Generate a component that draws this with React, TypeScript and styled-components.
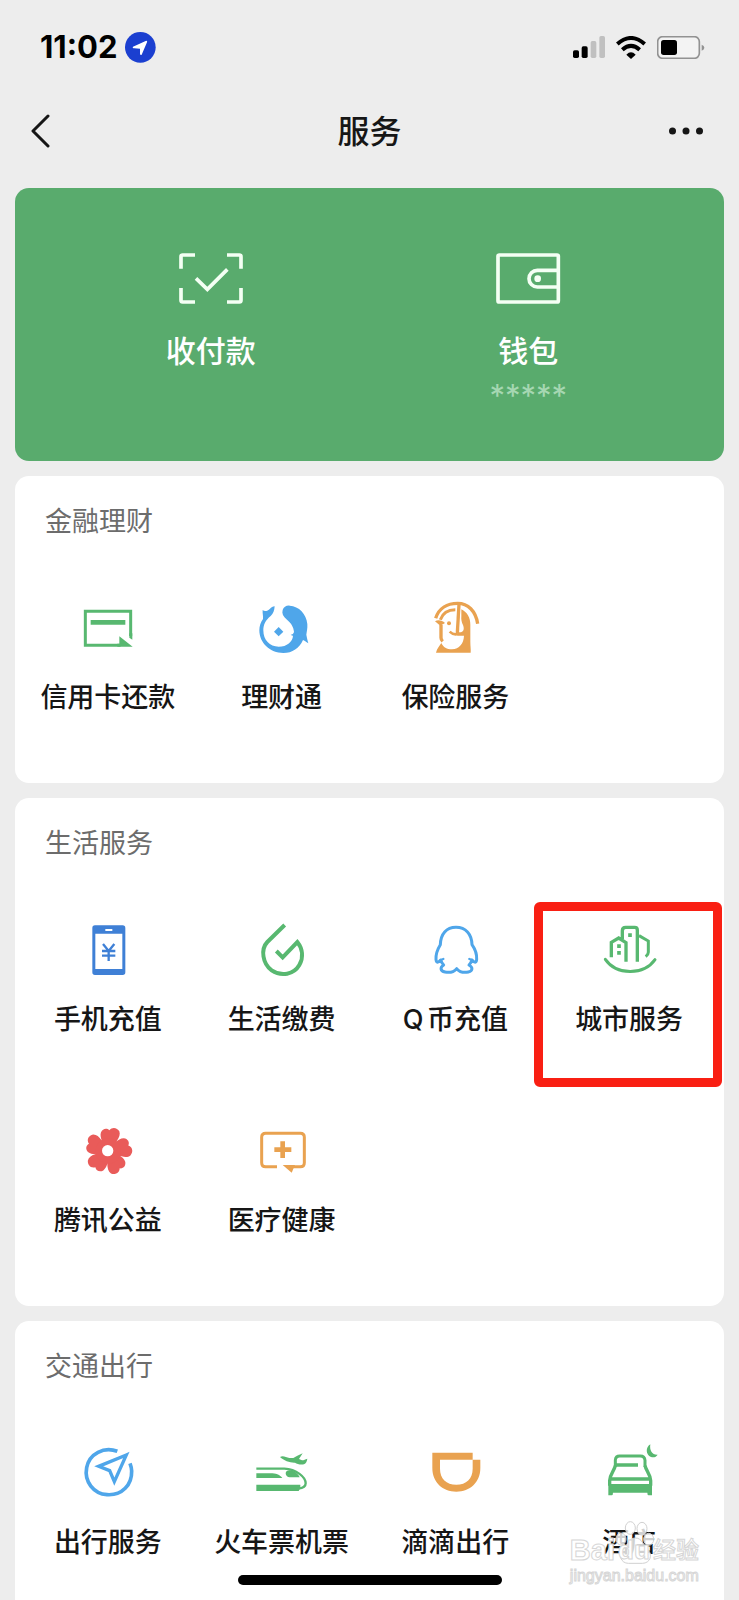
import React from "react";
import styled, { createGlobalStyle } from "styled-components";

const GREEN = "#58b870";
const BLUE = "#4fa6ea";
const DEEP_BLUE = "#3f80d6";
const ORANGE = "#e9a250";
const RED = "#e95b59";

const GlobalStyle = createGlobalStyle`
  * { box-sizing: border-box; }
  body {
    margin: 0;
    background: #ededed;
    color: #161616;
    font-family: Inter, "Noto Sans CJK SC", sans-serif;
  }
  button {
    font: inherit;
    color: inherit;
    background: none;
    border: 0;
    padding: 0;
    cursor: pointer;
  }
  svg { display: block; }
`;

const Screen = styled.div`
  position: relative;
  display: flex;
  flex-direction: column;
  height: 100vh;
  overflow: hidden;
`;

const StatusBar = styled.div`
  flex: none;
  display: flex;
  align-items: center;
  justify-content: space-between;
  height: 94px;
  padding: 0 34px 0 40px;
`;

const StatusGroup = styled.div<{ $gap: number }>`
  display: flex;
  align-items: center;
  gap: ${(p) => p.$gap}px;
`;

const Clock = styled.time`
  font-size: 31px;
  font-weight: 700;
  line-height: 36px;
  color: #000;
`;

const NavBar = styled.header`
  flex: none;
  display: grid;
  grid-template-columns: 1fr auto 1fr;
  align-items: center;
  height: 74px;
  padding: 0 30px;
`;

const NavButton = styled.button<{ $end?: boolean }>`
  justify-self: ${(p) => (p.$end ? "end" : "start")};
`;

const Title = styled.h1`
  margin: 0;
  padding-top: 2px;
  font-size: 32px;
  font-weight: 500;
  line-height: 40px;
`;

const Content = styled.main`
  flex: 1;
  min-height: 0;
  display: flex;
  flex-direction: column;
  gap: 15px;
  padding: 20px 15px 0;
  overflow-y: auto;
  scrollbar-width: none;
`;

const PayCard = styled.section`
  flex: none;
  display: grid;
  grid-template-columns: 1fr 1fr;
  align-items: start;
  padding: 60px 37px 48px;
  border-radius: 14px;
  background: #59ab6d;
  color: #fff;
`;

const PayButton = styled.button`
  display: flex;
  flex-direction: column;
  align-items: center;
`;

const PayLabel = styled.span`
  margin-top: 23px;
  font-size: 30px;
  font-weight: 500;
  line-height: 40px;
`;

const Balance = styled.span`
  margin-top: 4px;
  height: 38px;
  font-size: 31px;
  line-height: 42px;
  color: #a6d7b2;
`;

const Card = styled.section`
  flex: none;
  border-radius: 14px;
  background: #fff;
`;

const CardTitle = styled.h2`
  margin: 0;
  padding: 27px 30px 41px;
  font-size: 27px;
  font-weight: 400;
  line-height: 38px;
  color: #6c6c6c;
`;

const ServiceGrid = styled.ul`
  display: grid;
  grid-template-columns: repeat(4, 1fr);
  margin: 0;
  padding: 0 8px 0 6px;
  list-style: none;
`;

const ServiceCell = styled.li`
  position: relative;
`;

const ServiceButton = styled.button`
  display: flex;
  flex-direction: column;
  align-items: center;
  gap: 21px;
  width: 100%;
  padding: 16px 0 66px;
`;

const ServiceLabel = styled.span`
  font-size: 27px;
  font-weight: 500;
  line-height: 38px;
  white-space: nowrap;
  text-autospace: normal;
`;

const Highlight = styled.div`
  position: absolute;
  inset: -2px -6px 18px -8px;
  border: 9px solid #f91f13;
  border-radius: 6px;
  pointer-events: none;
`;

const HomeIndicator = styled.div`
  position: absolute;
  left: 50%;
  bottom: 15px;
  width: 264px;
  height: 10px;
  border-radius: 5px;
  background: #000;
  transform: translateX(-50%);
`;

const Watermark = styled.div`
  position: absolute;
  right: 40px;
  bottom: 14px;
  font-family: "Liberation Sans", "Noto Sans CJK SC", sans-serif;
  color: #fff;
  -webkit-text-stroke: 1px #d6d6d6;
  pointer-events: none;
`;

const WatermarkName = styled.div`
  display: flex;
  align-items: center;
  font-size: 29px;
  font-weight: 700;
  line-height: 32px;
`;

const WatermarkSmall = styled.span`
  font-size: 23px;
  font-weight: 500;
`;

const PawWrap = styled.span`
  position: relative;
  display: flex;
  justify-content: center;
  width: 38px;
`;

const Paw = styled.svg`
  position: absolute;
  left: 0;
  bottom: 2px;
`;

const PawText = styled.span`
  position: relative;
  font-size: 26px;
`;

const WatermarkUrl = styled.div`
  font-size: 16px;
  line-height: 20px;
`;

type IconProps = { x: number; y: number; children: React.ReactNode };

/* Service icons are drawn on a grid of three units to the pixel. */
const Icon = ({ x, y, children }: IconProps) => (
  <svg width="60" height="60" viewBox={`${x} ${y} 180 180`} fill="none" aria-hidden="true">
    {children}
  </svg>
);

const CreditCardIcon = () => (
  <Icon x={144} y={324}>
    <path d="M302 438V364H166V466H272" stroke={GREEN} strokeWidth="9" />
    <path d="M182 397H286" stroke={GREEN} strokeWidth="14" />
    <path d="M268 439L308 470H262V461H268Z" fill={GREEN} />
    <path d="M298 430H307V449L298 443Z" fill={GREEN} />
  </Icon>
);

const FishIcon = () => (
  <Icon x={665} y={324}>
    <path
      fill={BLUE}
      d="M697 360C703 366 712 363 719 356C723 352 727 350 733 349C732 362 729 370 721 378C706 390 699 404 699 421C699 450 718 470 745 470C770 470 787 455 788 437C786 437 783 436 781 434C786 434 790 431 791 426C790 410 781 398 770 389C758 380 754 370 757 360C760 351 768 346 778 347C806 349 828 371 831 402C832 416 829 426 828 434C830 445 832 453 834 460C827 455 822 452 818 450C807 475 786 489 759 489C719 489 687 459 687 421C687 408 691 396 698 387C699 378 696 370 697 360Z"
    />
    <path d="M745 411L759 425L745 439L731 425Z" fill={BLUE} />
  </Icon>
);

const InsuranceIcon = () => (
  <Icon x={1} y={9}>
    <path d="M33 70C42 40 68 25 99 25C130 25 153 48 159 86" stroke={ORANGE} strokeWidth="10" />
    <path d="M103 27L98 114" stroke={ORANGE} strokeWidth="10" />
    <path d="M47 74C54 54 70 44 92 44" stroke={ORANGE} strokeWidth="9" />
    <path d="M31 79C40 73 52 76 61 84L47 92Z" fill={ORANGE} />
    <circle cx="73" cy="85" r="6" fill={ORANGE} />
    <path d="M49 90V128C49 132 51 136 54 139" stroke={ORANGE} strokeWidth="10" />
    <path d="M110 43C128 52 137 68 137 90V140C137 154 139 162 138 173H34C37 160 44 154 50 144C56 157 66 163 82 163C104 161 117 146 118 122H98V112H109C118 109 119 100 115 90C111 82 109 74 110 64Z" fill={ORANGE} />
    <path d="M100 117C92 119 82 117 75 110" stroke={ORANGE} strokeWidth="8" />
  </Icon>
);

const PhoneIcon = () => (
  <Icon x={145} y={60}>
    <path
      fillRule="evenodd"
      fill={DEEP_BLUE}
      d="M196 76H279Q287 76 287 84V217Q287 225 279 225H196Q188 225 188 217V84Q188 76 196 76ZM197 101V207H278V101ZM227 87V93H248V87Z"
    />
    <path d="M220 132L237 153L254 132M237 151V183M217 153H257M217 167H257" stroke={DEEP_BLUE} strokeWidth="7" />
  </Icon>
);

const UtilityIcon = () => (
  <Icon x={665} y={60}>
    <path
      d="M763 75L711 126C690 148 697 192 724 211C753 231 791 223 807 195C820 172 817 146 801 126L757 172L738 153"
      stroke={GREEN}
      strokeWidth="12"
    />
  </Icon>
);

const PenguinIcon = () => (
  <Icon x={106} y={90}>
    <path
      stroke={BLUE}
      strokeWidth="9"
      strokeLinejoin="round"
      strokeLinecap="round"
      d="M199 112C170 112 153 132 152 164C144 177 138 192 139 208C140 219 145 219 153 210C155 217 158 221 162 225C151 232 151 243 166 246C181 249 194 244 201 236C208 244 221 249 236 246C250 243 250 232 238 225C243 220 245 217 247 210C255 219 260 219 261 208C262 192 256 177 247 164C246 132 228 112 199 112Z"
    />
    <path d="M153 210L161 207M247 210L239 207" stroke={BLUE} strokeWidth="7" strokeLinecap="round" />
  </Icon>
);

const CityIcon = () => (
  <Icon x={627} y={90}>
    <path d="M664 202V157L686 144L708 158V215M697 147V122Q697 112 707 112H734Q742 112 742 120V215" stroke={GREEN} strokeWidth="10" />
    <path d="M747 137L775 153V187Q775 194 767 200" stroke={GREEN} strokeWidth="9" />
    <path d="M720 130V141M687 163V174M687 183V194" stroke={GREEN} strokeWidth="11" />
    <path d="M646 208C679 256 761 257 795 209" stroke={GREEN} strokeWidth="9" strokeLinecap="round" />
  </Icon>
);

const petal = "M233 124C222 106 207 83 213 67C218 56 230 53 238 61C247 49 262 53 268 64C275 82 252 104 233 124Z";

const FlowerIcon = () => (
  <Icon x={144} y={33}>
    {[0, 72, 144, 216, 288].map((turn) => (
      <path key={turn} d={petal} fill={RED} transform={`rotate(${turn} 235 123)`} />
    ))}
    <circle cx="235" cy="123" r="38" fill={RED} />
    <circle cx="233" cy="122" r="17" fill="#fff" />
  </Icon>
);

const HealthIcon = () => (
  <Icon x={665} y={33}>
    <path d="M740 170H706Q694 170 694 158V82Q694 70 706 70H810Q822 70 822 82V158Q822 170 810 170H782" stroke={ORANGE} strokeWidth="9" />
    <path d="M757 94V144M732 119H783" stroke={ORANGE} strokeWidth="14" />
    <path d="M757 165H794L784 188Z" fill={ORANGE} />
  </Icon>
);

const TravelIcon = () => (
  <Icon x={144} y={312}>
    <path d="M262 337C222 322 178 344 170 386C162 428 191 464 231 467C277 470 306 437 305 396C305 388 303 381 300 373" stroke={BLUE} strokeWidth="11" />
    <path d="M289 348L206 382L239 395L253 428Z" stroke={BLUE} strokeWidth="10" />
  </Icon>
);

const TrainIcon = () => (
  <Icon x={667} y={312}>
    <path d="M680 389H764C800 391 828 414 828 433Q828 447 806 449" stroke={GREEN} strokeWidth="7" />
    <path d="M768 403C768 393 782 392 792 397C802 402 808 409 810 415H780C773 415 768 410 768 403Z" fill={GREEN} />
    <path d="M680 403H728C744 404 752 410 758 417H680ZM680 437H812V447L807 456H680Z" fill={GREEN} />
    <path d="M751 354C760 349 769 355 779 357H791L803 350L819 343L808 360L817 364C823 364 827 360 833 359C832 367 829 373 823 376C812 378 802 375 796 371C783 372 762 365 751 354Z" fill={GREEN} />
  </Icon>
);

const DidiIcon = () => (
  <Icon x={166} y={72}>
    <path
      fillRule="evenodd"
      fill={ORANGE}
      d="M188 101H309V122H332V147C332 190 301 218 260 218C219 218 188 190 188 147ZM211 122V149C211 179 230 197 260 197C290 197 309 179 309 149V122Z"
    />
  </Icon>
);

const HotelIcon = () => (
  <Icon x={687} y={72}>
    <path d="M736 143V123Q737 111 749 111H811Q824 111 825 124V143" stroke={GREEN} strokeWidth="9" />
    <path d="M736 140C733 155 720 164 719 185V200M825 140C828 155 841 164 842 185V200M738 138H804M720 180H841" stroke={GREEN} strokeWidth="10" />
    <path d="M715 195H846V229H836Q832 229 832 221H729Q729 229 725 229H715Z" fill={GREEN} />
    <path d="M841 76C826 85 827 108 843 114C852 117 859 113 863 107C847 108 838 96 841 76Z" fill={GREEN} />
  </Icon>
);

const ScanPayIcon = () => (
  <svg width="72" height="60" viewBox="105 54 216 180" fill="none" stroke="#f4fff4" strokeWidth="11" aria-hidden="true">
    <path d="M165 75H128Q123 75 123 80V116M261 75H298Q303 75 303 80V116M123 174V211Q123 216 128 216H165M303 174V211Q303 216 298 216H261" />
    <path d="M168 145L202 178L262 118" />
  </svg>
);

const WalletIcon = () => (
  <svg width="72" height="60" viewBox="1056 54 216 180" fill="none" stroke="#f4fff4" strokeWidth="11" aria-hidden="true">
    <rect x="1074" y="75" width="181" height="141" rx="4" />
    <path d="M1255 121H1192A25 25 0 0 0 1192 171H1255" />
    <circle cx="1193" cy="146" r="10" fill="#f4fff4" stroke="none" />
  </svg>
);

type Service = { label: string; icon: React.ComponentType; highlighted?: boolean };

const sections: { title: string; services: Service[] }[] = [
  {
    title: "金融理财",
    services: [
      { label: "信用卡还款", icon: CreditCardIcon },
      { label: "理财通", icon: FishIcon },
      { label: "保险服务", icon: InsuranceIcon },
    ],
  },
  {
    title: "生活服务",
    services: [
      { label: "手机充值", icon: PhoneIcon },
      { label: "生活缴费", icon: UtilityIcon },
      { label: "Q币充值", icon: PenguinIcon },
      { label: "城市服务", icon: CityIcon, highlighted: true },
      { label: "腾讯公益", icon: FlowerIcon },
      { label: "医疗健康", icon: HealthIcon },
    ],
  },
  {
    title: "交通出行",
    services: [
      { label: "出行服务", icon: TravelIcon },
      { label: "火车票机票", icon: TrainIcon },
      { label: "滴滴出行", icon: DidiIcon },
      { label: "酒店", icon: HotelIcon },
    ],
  },
];

export default function App() {
  return (
    <Screen>
      <GlobalStyle />
      <StatusBar>
        <StatusGroup $gap={7}>
          <Clock>11:02</Clock>
          <svg width="31" height="31" viewBox="0 0 93 93" aria-hidden="true">
            <circle cx="46" cy="46" r="46" fill="#1b3fd0" />
            <path d="M24 44L62 27Q68 25 66 31L50 68Q46 71 45 65V50L28 49Q21 48 24 44Z" fill="#fff" />
          </svg>
        </StatusGroup>
        <StatusGroup $gap={11}>
          <svg width="32" height="22" viewBox="0 0 96 66" aria-hidden="true">
            <rect x="0" y="43" width="18" height="23" rx="5" />
            <rect x="26" y="31" width="18" height="35" rx="5" />
            <rect x="53" y="15" width="17" height="51" rx="5" fill="#c0c0c0" />
            <rect x="79" y="0" width="17" height="66" rx="5" fill="#c0c0c0" />
          </svg>
          <svg width="30" height="23" viewBox="738 104 90 69" fill="none" stroke="#000" strokeWidth="12" aria-hidden="true">
            <path d="M742 128Q783 92 824 128M757 145Q783 122 809 145" />
            <path d="M783 173L769 160Q783 146 797 160Z" fill="#000" stroke="none" />
          </svg>
          <svg width="48" height="23" viewBox="861 105 144 69" fill="none" aria-hidden="true">
            <rect x="863" y="107" width="125" height="65" rx="15" fill="#f3f3f3" stroke="#929292" strokeWidth="5" />
            <rect x="873" y="117" width="48" height="45" rx="8" fill="#000" />
            <path d="M995 131Q1003 134 1003 140Q1003 146 995 149Z" fill="#929292" />
          </svg>
        </StatusGroup>
      </StatusBar>

      <NavBar>
        <NavButton aria-label="返回">
          <svg width="20" height="34" viewBox="0 0 20 34" fill="none" stroke="#161616" strokeWidth="3" strokeLinecap="round" strokeLinejoin="round">
            <path d="M18 2L3 17L18 32" />
          </svg>
        </NavButton>
        <Title>服务</Title>
        <NavButton $end aria-label="更多">
          <svg width="40" height="10" viewBox="0 0 80 20" fill="#161616">
            <circle cx="7" cy="10" r="7" />
            <circle cx="34" cy="10" r="7" />
            <circle cx="61" cy="10" r="7" />
          </svg>
        </NavButton>
      </NavBar>

      <Content>
        <PayCard>
          <PayButton>
            <ScanPayIcon />
            <PayLabel>收付款</PayLabel>
          </PayButton>
          <PayButton>
            <WalletIcon />
            <PayLabel>钱包</PayLabel>
            <Balance>*****</Balance>
          </PayButton>
        </PayCard>

        {sections.map((section) => (
          <Card key={section.title}>
            <CardTitle>{section.title}</CardTitle>
            <ServiceGrid>
              {section.services.map(({ label, icon: ServiceIcon, highlighted }) => (
                <ServiceCell key={label}>
                  <ServiceButton>
                    <ServiceIcon />
                    <ServiceLabel>{label}</ServiceLabel>
                  </ServiceButton>
                  {highlighted && <Highlight />}
                </ServiceCell>
              ))}
            </ServiceGrid>
          </Card>
        ))}
      </Content>

      <HomeIndicator />
      <Watermark>
        <WatermarkName>
          Bai
          <PawWrap>
            <Paw width="40" height="44" viewBox="724 296 120 132" fill="rgba(255,255,255,0.8)" stroke="#d0d0d0" strokeWidth="3" aria-hidden="true">
              <ellipse cx="770" cy="320" rx="15" ry="19" />
              <ellipse cx="805" cy="322" rx="15" ry="19" />
              <ellipse cx="742" cy="353" rx="15" ry="18" />
              <ellipse cx="825" cy="354" rx="15" ry="18" />
              <path d="M785 350C765 350 762 372 748 384C732 400 742 426 764 426H806C830 426 838 400 822 384C808 372 806 350 785 350Z" />
            </Paw>
            <PawText>du</PawText>
          </PawWrap>
          <WatermarkSmall>经验</WatermarkSmall>
        </WatermarkName>
        <WatermarkUrl>jingyan.baidu.com</WatermarkUrl>
      </Watermark>
    </Screen>
  );
}
